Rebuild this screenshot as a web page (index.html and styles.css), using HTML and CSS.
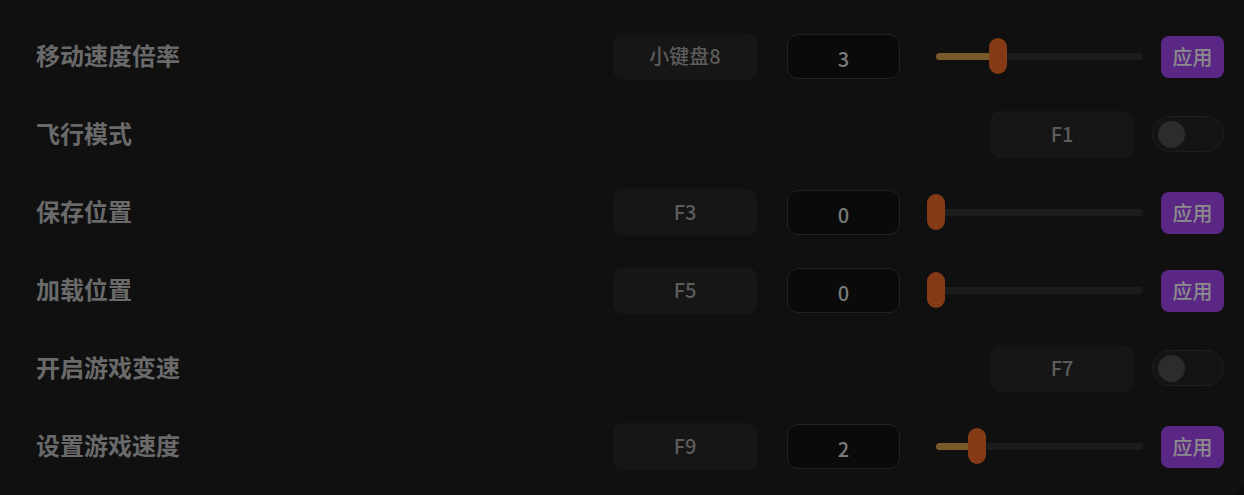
FILE: index.html
```html
<!DOCTYPE html>
<html lang="zh-CN">
<head>
<meta charset="utf-8">
<title>设置</title>
<link rel="stylesheet" href="styles.css">
</head>
<body>
<div class="panel">
  <div class="row">
    <div class="label">移动速度倍率</div>
    <div class="controls">
      <div class="key">小键盘8</div>
      <div class="num">3</div>
      <div class="slider"><div class="track"><div class="fill" style="width:30%"></div><div class="thumb" style="left:30%"></div></div></div>
      <button class="apply">应用</button>
    </div>
  </div>
  <div class="row">
    <div class="label">飞行模式</div>
    <div class="controls">
      <div class="key">F1</div>
      <div class="toggle"><div class="knob"></div></div>
    </div>
  </div>
  <div class="row">
    <div class="label">保存位置</div>
    <div class="controls">
      <div class="key">F3</div>
      <div class="num">0</div>
      <div class="slider"><div class="track"><div class="fill" style="width:0%"></div><div class="thumb" style="left:0%"></div></div></div>
      <button class="apply">应用</button>
    </div>
  </div>
  <div class="row">
    <div class="label">加载位置</div>
    <div class="controls">
      <div class="key">F5</div>
      <div class="num">0</div>
      <div class="slider"><div class="track"><div class="fill" style="width:0%"></div><div class="thumb" style="left:0%"></div></div></div>
      <button class="apply">应用</button>
    </div>
  </div>
  <div class="row">
    <div class="label">开启游戏变速</div>
    <div class="controls">
      <div class="key">F7</div>
      <div class="toggle"><div class="knob"></div></div>
    </div>
  </div>
  <div class="row">
    <div class="label">设置游戏速度</div>
    <div class="controls">
      <div class="key">F9</div>
      <div class="num">2</div>
      <div class="slider"><div class="track"><div class="fill" style="width:20%"></div><div class="thumb" style="left:20%"></div></div></div>
      <button class="apply">应用</button>
    </div>
  </div>
</div>
</body>
</html>
```

FILE: styles.css
```css
* { box-sizing: border-box; }
html, body {
  margin: 0;
  padding: 0;
  background: #0b0b0b;
}
body {
  width: 1244px;
  height: 495px;
  overflow: hidden;
  font-family: "Noto Sans CJK SC", "Noto Sans", sans-serif;
}
.panel {
  width: 1244px;
  height: 495px;
  background: #101010;
  border-bottom-right-radius: 12px;
  padding: 17px 20px 0 36px;
  display: flex;
  flex-direction: column;
}
.row {
  height: 78px;
  display: flex;
  align-items: center;
  justify-content: space-between;
}
.label {
  font-size: 24px;
  font-weight: 700;
  color: #6a6a6a;
  line-height: 1;
  margin-top: -2px;
}
.controls {
  display: flex;
  align-items: center;
}
.key {
  width: 144px;
  height: 47px;
  border-radius: 10px;
  background: #161616;
  color: #5c5c5c;
  font-size: 20px;
  font-weight: 500;
  display: flex;
  align-items: center;
  justify-content: center;
  line-height: 1;
}
.num {
  margin-left: 30px;
  width: 113px;
  height: 45px;
  border-radius: 11px;
  background: #0a0a0a;
  border: 1px solid #222222;
  color: #7a7a7a;
  font-size: 20px;
  font-weight: 500;
  display: flex;
  align-items: center;
  justify-content: center;
  padding-top: 5px;
  line-height: 1;
}
.slider {
  margin-left: 36px;
  width: 207px;
  height: 36px;
  display: flex;
  align-items: center;
}
.track {
  position: relative;
  width: 100%;
  height: 7px;
  border-radius: 4px;
  background: #1c1c1c;
}
.fill {
  height: 100%;
  border-radius: 4px;
  background: #7a5a2b;
}
.thumb {
  position: absolute;
  top: 50%;
  width: 18px;
  height: 36px;
  margin-left: -9px;
  margin-top: -18px;
  border-radius: 9px;
  background: #833a15;
}
.apply {
  margin-left: 18px;
  width: 63px;
  height: 42px;
  border: none;
  border-radius: 8px;
  background: #5a2785;
  color: #8c8c8c;
  font-family: inherit;
  font-size: 20px;
  font-weight: 500;
  line-height: 1;
  padding: 0;
  margin-top: 1px;
}
.toggle {
  margin-left: 18px;
  width: 72px;
  height: 36px;
  border-radius: 18px;
  background: #141414;
  border: 1px solid #1e1e1e;
  display: flex;
  align-items: center;
  padding-left: 5px;
}
.knob {
  width: 27px;
  height: 27px;
  border-radius: 50%;
  background: #2c2c2c;
}
```
